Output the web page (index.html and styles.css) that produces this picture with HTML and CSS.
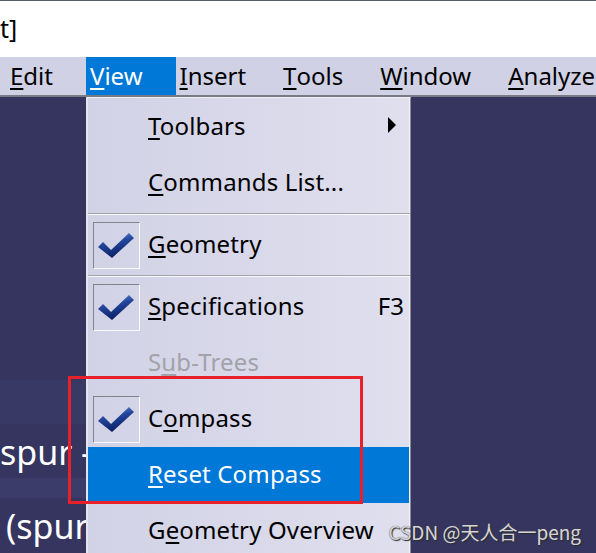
FILE: index.html
```html
<!DOCTYPE html>
<html lang="en">
<head>
<meta charset="utf-8">
<title>View menu</title>
<link rel="stylesheet" href="styles.css">
</head>
<body>
<div class="screen">
  <header class="titlebar"><span class="title">t]</span></header>
  <nav class="menubar">
    <span class="mi"><u>E</u>dit</span>
    <span class="mi active"><u>V</u>iew</span>
    <span class="mi"><u>I</u>nsert</span>
    <span class="mi"><u>T</u>ools</span>
    <span class="mi"><u>W</u>indow</span>
    <span class="mi"><u>A</u>nalyze</span>
  </nav>
  <main class="workspace">
    <div class="tree">
      <div class="tree-gap"></div>
      <div class="tree-band"></div>
      <div class="tree-row">spur -</div>
      <div class="tree-band thin"></div>
      <div class="tree-row indent">(spur</div>
    </div>

    <div class="dropdown">
      <div class="item">
        <span class="chk-col"></span>
        <span class="label"><u>T</u>oolbars</span>
        <span class="arrow"></span>
      </div>
      <div class="item">
        <span class="chk-col"></span>
        <span class="label"><u>C</u>ommands List...</span>
      </div>
      <div class="sep"></div>
      <div class="item">
        <span class="chk-col"><span class="chk"><svg viewBox="0 0 45 45" width="45" height="45"><defs><linearGradient id="g1" x1="0" y1="0" x2="0.3" y2="1"><stop offset="0" stop-color="#6a9ae6"/><stop offset="0.45" stop-color="#24479c"/><stop offset="1" stop-color="#0b1f66"/></linearGradient></defs><polygon points="4,24 9,19 17,27 35,10 40,15 18,35" fill="url(#g1)"/></svg></span></span>
        <span class="label"><u>G</u>eometry</span>
      </div>
      <div class="sep"></div>
      <div class="item">
        <span class="chk-col"><span class="chk"><svg viewBox="0 0 45 45" width="45" height="45"><defs><linearGradient id="g2" x1="0" y1="0" x2="0.3" y2="1"><stop offset="0" stop-color="#6a9ae6"/><stop offset="0.45" stop-color="#24479c"/><stop offset="1" stop-color="#0b1f66"/></linearGradient></defs><polygon points="4,24 9,19 17,27 35,10 40,15 18,35" fill="url(#g2)"/></svg></span></span>
        <span class="label"><u>S</u>pecifications</span>
        <span class="key">F3</span>
      </div>
      <div class="item disabled">
        <span class="chk-col"></span>
        <span class="label">S<u>u</u>b-Trees</span>
      </div>
      <div class="item">
        <span class="chk-col"><span class="chk"><svg viewBox="0 0 45 45" width="45" height="45"><defs><linearGradient id="g3" x1="0" y1="0" x2="0.3" y2="1"><stop offset="0" stop-color="#6a9ae6"/><stop offset="0.45" stop-color="#24479c"/><stop offset="1" stop-color="#0b1f66"/></linearGradient></defs><polygon points="4,24 9,19 17,27 35,10 40,15 18,35" fill="url(#g3)"/></svg></span></span>
        <span class="label">C<u>o</u>mpass</span>
      </div>
      <div class="item hot">
        <span class="chk-col"></span>
        <span class="label"><u>R</u>eset Compass</span>
      </div>
      <div class="item">
        <span class="chk-col"></span>
        <span class="label">G<u>e</u>ometry Overview</span>
      </div>
    </div>

    <div class="annot"></div>
    <div class="watermark">CSDN @天人合一peng</div>
  </main>
</div>
</body>
</html>
```

FILE: styles.css
```css
html, body {
  margin: 0;
  padding: 0;
}
body {
  width: 596px;
  height: 553px;
  overflow: hidden;
  font-family: "Noto Sans", "Open Sans", sans-serif;
  color: #000;
}
.screen {
  display: flex;
  flex-direction: column;
  height: 553px;
}
.titlebar {
  height: 56px;
  border-top: 1px solid #56606c;
  background: #fff;
  display: flex;
  align-items: center;
  flex: none;
}
.title {
  font-size: 25px;
  line-height: 1;
  margin-top: -2px;
}
u {
  text-decoration-thickness: 2px;
  text-underline-offset: 3px;
}
.menubar {
  height: 38px;
  flex: none;
  background: #d1d1e5;
  display: flex;
  align-items: stretch;
  padding-left: 6px;
  overflow: hidden;
}
.mi {
  display: flex;
  align-items: center;
  padding: 0 33px 2px 4px;
  font-size: 24px;
  white-space: nowrap;
}
.mi.active {
  background: #0078d7;
  color: #fff;
}
.workspace {
  flex: 1;
  position: relative;
  background: #35355f;
  border-top: 2px solid #7a7a84;
  overflow: hidden;
}
.tree {
  width: 86px;
  display: flex;
  flex-direction: column;
}
.tree-gap {
  height: 283px;
}
.tree-band {
  height: 44px;
  background: #393966;
}
.tree-band.thin {
  height: 20px;
  background: #3c3c6a;
}
.tree-row {
  height: 54px;
  line-height: 56px;
  font-size: 34px;
  color: #fff;
  white-space: nowrap;
}
.tree-row.indent {
  padding-left: 6px;
}
.dropdown {
  position: absolute;
  left: 86px;
  top: 0;
  width: 325px;
  box-sizing: border-box;
  border-top: 1px solid #eeeef6;
  border-left: 2px solid #e4e4ee;
  border-right: 1px solid #8a8a92;
  box-shadow: inset -1px 0 #f2f2f8;
  padding: 1px 0 0 0;
  background: linear-gradient(to right, #d2d2e6, #dfdfee);
  z-index: 1;
}
.item {
  height: 56px;
  display: flex;
  align-items: center;
  font-size: 24px;
  white-space: nowrap;
}
.label,
.key {
  padding-bottom: 3px;
}
.chk-col {
  width: 60px;
  height: 100%;
  flex: none;
  display: flex;
  align-items: center;
  padding-left: 5px;
  box-sizing: border-box;
}
.chk {
  width: 47px;
  height: 47px;
  box-sizing: border-box;
  border: 1px solid;
  border-color: #848488 #fafafe #fafafe #848488;
  display: flex;
  align-items: center;
  justify-content: center;
}
.chk svg {
  display: block;
}
.label {
  flex: 1;
  letter-spacing: 0.15px;
}
.key {
  margin-right: 6px;
}
.arrow {
  width: 0;
  height: 0;
  border-top: 8px solid transparent;
  border-bottom: 8px solid transparent;
  border-left: 8px solid #000;
  margin-right: 14px;
  margin-top: -5px;
}
.item.disabled {
  color: #a2a2aa;
}
.item.hot {
  background: #0078d7;
  color: #fff;
  margin-right: 1px;
}
.sep {
  height: 0;
  margin: 2px 0;
  border-top: 1px solid #a2a2aa;
  border-bottom: 1px solid #fafafe;
}
.annot {
  position: absolute;
  left: 68px;
  top: 279px;
  width: 295px;
  height: 128px;
  box-sizing: border-box;
  border: 3px solid #e8202a;
  z-index: 2;
}
.watermark {
  position: absolute;
  right: 15px;
  bottom: 9px;
  font-family: "Noto Sans CJK SC", "Noto Sans", sans-serif;
  font-size: 19px;
  line-height: 24px;
  color: #d4d4d8;
  text-shadow: 1px 1px 1px #2a2a2a, 0 0 1px #555;
  z-index: 3;
  white-space: nowrap;
}
```
